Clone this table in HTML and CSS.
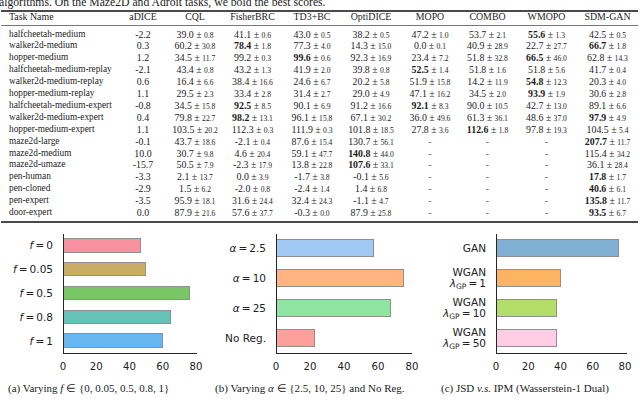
FILE: index.html
```html
<!DOCTYPE html>
<html lang="en">
<head>
<meta charset="utf-8">
<title>Results</title>
<link rel="stylesheet" href="styles.css">
</head>
<body>
<p class="caption">algorithms. On the Maze2D and Adroit tasks, we bold the best scores.</p>
<table class="results">
  <colgroup>
    <col class="w-task"><col class="w-50"><col class="w-54"><col class="w-61"><col class="w-58"><col class="w-60"><col class="w-58"><col class="w-57"><col class="w-61"><col class="w-61">
  </colgroup>
  <thead>
    <tr><th class="task">Task Name</th><th>aDICE</th><th>CQL</th><th>FisherBRC</th><th>TD3+BC</th><th>OptiDICE</th><th>MOPO</th><th>COMBO</th><th>WMOPO</th><th>SDM-GAN</th></tr>
  </thead>
  <tbody>
    <tr><td class="task">halfcheetah-medium</td><td>-2.2</td><td>39.0<span class="pm">±</span><small>0.8</small></td><td>41.1<span class="pm">±</span><small>0.6</small></td><td>43.0<span class="pm">±</span><small>0.5</small></td><td>38.2<span class="pm">±</span><small>0.5</small></td><td>47.2<span class="pm">±</span><small>1.0</small></td><td>53.7<span class="pm">±</span><small>2.1</small></td><td><b>55.6</b><span class="pm">±</span><small>1.3</small></td><td>42.5<span class="pm">±</span><small>0.5</small></td></tr>
    <tr><td class="task">walker2d-medium</td><td>0.3</td><td>60.2<span class="pm">±</span><small>30.8</small></td><td><b>78.4</b><span class="pm">±</span><small>1.8</small></td><td>77.3<span class="pm">±</span><small>4.0</small></td><td>14.3<span class="pm">±</span><small>15.0</small></td><td>0.0<span class="pm">±</span><small>0.1</small></td><td>40.9<span class="pm">±</span><small>28.9</small></td><td>22.7<span class="pm">±</span><small>27.7</small></td><td><b>66.7</b><span class="pm">±</span><small>1.8</small></td></tr>
    <tr><td class="task">hopper-medium</td><td>1.2</td><td>34.5<span class="pm">±</span><small>11.7</small></td><td>99.2<span class="pm">±</span><small>0.3</small></td><td><b>99.6</b><span class="pm">±</span><small>0.6</small></td><td>92.3<span class="pm">±</span><small>16.9</small></td><td>23.4<span class="pm">±</span><small>7.2</small></td><td>51.8<span class="pm">±</span><small>32.8</small></td><td><b>66.5</b><span class="pm">±</span><small>46.0</small></td><td>62.8<span class="pm">±</span><small>14.3</small></td></tr>
    <tr><td class="task">halfcheetah-medium-replay</td><td>-2.1</td><td>43.4<span class="pm">±</span><small>0.8</small></td><td>43.2<span class="pm">±</span><small>1.3</small></td><td>41.9<span class="pm">±</span><small>2.0</small></td><td>39.8<span class="pm">±</span><small>0.8</small></td><td><b>52.5</b><span class="pm">±</span><small>1.4</small></td><td>51.8<span class="pm">±</span><small>1.6</small></td><td>51.8<span class="pm">±</span><small>5.6</small></td><td>41.7<span class="pm">±</span><small>0.4</small></td></tr>
    <tr><td class="task">walker2d-medium-replay</td><td>0.6</td><td>16.4<span class="pm">±</span><small>6.6</small></td><td>38.4<span class="pm">±</span><small>16.6</small></td><td>24.6<span class="pm">±</span><small>6.7</small></td><td>20.2<span class="pm">±</span><small>5.8</small></td><td>51.9<span class="pm">±</span><small>15.8</small></td><td>14.2<span class="pm">±</span><small>11.9</small></td><td><b>54.8</b><span class="pm">±</span><small>12.3</small></td><td>20.3<span class="pm">±</span><small>4.0</small></td></tr>
    <tr><td class="task">hopper-medium-replay</td><td>1.1</td><td>29.5<span class="pm">±</span><small>2.3</small></td><td>33.4<span class="pm">±</span><small>2.8</small></td><td>31.4<span class="pm">±</span><small>2.7</small></td><td>29.0<span class="pm">±</span><small>4.9</small></td><td>47.1<span class="pm">±</span><small>16.2</small></td><td>34.5<span class="pm">±</span><small>2.0</small></td><td><b>93.9</b><span class="pm">±</span><small>1.9</small></td><td>30.6<span class="pm">±</span><small>2.8</small></td></tr>
    <tr><td class="task">halfcheetah-medium-expert</td><td>-0.8</td><td>34.5<span class="pm">±</span><small>15.8</small></td><td><b>92.5</b><span class="pm">±</span><small>8.5</small></td><td>90.1<span class="pm">±</span><small>6.9</small></td><td>91.2<span class="pm">±</span><small>16.6</small></td><td><b>92.1</b><span class="pm">±</span><small>8.3</small></td><td>90.0<span class="pm">±</span><small>10.5</small></td><td>42.7<span class="pm">±</span><small>13.0</small></td><td>89.1<span class="pm">±</span><small>6.6</small></td></tr>
    <tr><td class="task">walker2d-medium-expert</td><td>0.4</td><td>79.8<span class="pm">±</span><small>22.7</small></td><td><b>98.2</b><span class="pm">±</span><small>13.1</small></td><td>96.1<span class="pm">±</span><small>15.8</small></td><td>67.1<span class="pm">±</span><small>30.2</small></td><td>36.0<span class="pm">±</span><small>49.6</small></td><td>61.3<span class="pm">±</span><small>36.1</small></td><td>48.6<span class="pm">±</span><small>37.0</small></td><td><b>97.9</b><span class="pm">±</span><small>4.9</small></td></tr>
    <tr><td class="task">hopper-medium-expert</td><td>1.1</td><td>103.5<span class="pm">±</span><small>20.2</small></td><td>112.3<span class="pm">±</span><small>0.3</small></td><td>111.9<span class="pm">±</span><small>0.3</small></td><td>101.8<span class="pm">±</span><small>18.5</small></td><td>27.8<span class="pm">±</span><small>3.6</small></td><td><b>112.6</b><span class="pm">±</span><small>1.8</small></td><td>97.8<span class="pm">±</span><small>19.3</small></td><td>104.5<span class="pm">±</span><small>5.4</small></td></tr>
    <tr><td class="task">maze2d-large</td><td>-0.1</td><td>43.7<span class="pm">±</span><small>18.6</small></td><td>-2.1<span class="pm">±</span><small>0.4</small></td><td>87.6<span class="pm">±</span><small>15.4</small></td><td>130.7<span class="pm">±</span><small>56.1</small></td><td class="na">-</td><td class="na">-</td><td class="na">-</td><td><b>207.7</b><span class="pm">±</span><small>11.7</small></td></tr>
    <tr><td class="task">maze2d-medium</td><td>10.0</td><td>30.7<span class="pm">±</span><small>9.8</small></td><td>4.6<span class="pm">±</span><small>20.4</small></td><td>59.1<span class="pm">±</span><small>47.7</small></td><td><b>140.8</b><span class="pm">±</span><small>44.0</small></td><td class="na">-</td><td class="na">-</td><td class="na">-</td><td>115.4<span class="pm">±</span><small>34.2</small></td></tr>
    <tr><td class="task">maze2d-umaze</td><td>-15.7</td><td>50.5<span class="pm">±</span><small>7.9</small></td><td>-2.3<span class="pm">±</span><small>17.9</small></td><td>13.8<span class="pm">±</span><small>22.8</small></td><td><b>107.6</b><span class="pm">±</span><small>33.1</small></td><td class="na">-</td><td class="na">-</td><td class="na">-</td><td>36.1<span class="pm">±</span><small>28.4</small></td></tr>
    <tr><td class="task">pen-human</td><td>-3.3</td><td>2.1<span class="pm">±</span><small>13.7</small></td><td>0.0<span class="pm">±</span><small>3.9</small></td><td>-1.7<span class="pm">±</span><small>3.8</small></td><td>-0.1<span class="pm">±</span><small>5.6</small></td><td class="na">-</td><td class="na">-</td><td class="na">-</td><td><b>17.8</b><span class="pm">±</span><small>1.7</small></td></tr>
    <tr><td class="task">pen-cloned</td><td>-2.9</td><td>1.5<span class="pm">±</span><small>6.2</small></td><td>-2.0<span class="pm">±</span><small>0.8</small></td><td>-2.4<span class="pm">±</span><small>1.4</small></td><td>1.4<span class="pm">±</span><small>6.8</small></td><td class="na">-</td><td class="na">-</td><td class="na">-</td><td><b>40.6</b><span class="pm">±</span><small>6.1</small></td></tr>
    <tr><td class="task">pen-expert</td><td>-3.5</td><td>95.9<span class="pm">±</span><small>18.1</small></td><td>31.6<span class="pm">±</span><small>24.4</small></td><td>32.4<span class="pm">±</span><small>24.3</small></td><td>-1.1<span class="pm">±</span><small>4.7</small></td><td class="na">-</td><td class="na">-</td><td class="na">-</td><td><b>135.8</b><span class="pm">±</span><small>11.7</small></td></tr>
    <tr><td class="task">door-expert</td><td>0.0</td><td>87.9<span class="pm">±</span><small>21.6</small></td><td>57.6<span class="pm">±</span><small>37.7</small></td><td>-0.3<span class="pm">±</span><small>0.0</small></td><td>87.9<span class="pm">±</span><small>25.8</small></td><td class="na">-</td><td class="na">-</td><td class="na">-</td><td><b>93.5</b><span class="pm">±</span><small>6.7</small></td></tr>
  </tbody>
</table>

<div class="figures">
  <figure class="panel panel-a">
    <div class="chart">
      <div class="ylabels">
        <div class="ylab"><i>f</i>&#8201;=&#8201;0</div>
        <div class="ylab"><i>f</i>&#8201;=&#8201;0.05</div>
        <div class="ylab"><i>f</i>&#8201;=&#8201;0.5</div>
        <div class="ylab"><i>f</i>&#8201;=&#8201;0.8</div>
        <div class="ylab"><i>f</i>&#8201;=&#8201;1</div>
      </div>
      <div class="plot">
        <div class="band"><div class="bar a1" style="width:77px"></div></div>
        <div class="band"><div class="bar a2" style="width:82px"></div></div>
        <div class="band"><div class="bar a3" style="width:126px"></div></div>
        <div class="band"><div class="bar a4" style="width:107px"></div></div>
        <div class="band"><div class="bar a5" style="width:99px"></div></div>
      </div>
      <div class="xticks"><span>0</span><span>20</span><span>40</span><span>60</span><span>80</span></div>
    </div>
    <figcaption>(a) Varying <i>f</i> ∈ {0, 0.05, 0.5, 0.8, 1}</figcaption>
  </figure>

  <figure class="panel panel-b">
    <div class="chart">
      <div class="ylabels">
        <div class="ylab"><i>α</i>&#8201;=&#8201;2.5</div>
        <div class="ylab"><i>α</i>&#8201;=&#8201;10</div>
        <div class="ylab"><i>α</i>&#8201;=&#8201;25</div>
        <div class="ylab">No Reg.</div>
      </div>
      <div class="plot">
        <div class="band"><div class="bar b1" style="width:97px"></div></div>
        <div class="band"><div class="bar b2" style="width:127px"></div></div>
        <div class="band"><div class="bar b3" style="width:114px"></div></div>
        <div class="band"><div class="bar b4" style="width:38px"></div></div>
      </div>
      <div class="xticks"><span>0</span><span>20</span><span>40</span><span>60</span><span>80</span></div>
    </div>
    <figcaption>(b) Varying <i>α</i> ∈ {2.5, 10, 25} and No Reg.</figcaption>
  </figure>

  <figure class="panel panel-c">
    <div class="chart">
      <div class="ylabels">
        <div class="ylab">GAN</div>
        <div class="ylab two"><span>WGAN</span><span><i>λ</i><sub>GP</sub>&#8201;=&#8201;1</span></div>
        <div class="ylab two"><span>WGAN</span><span><i>λ</i><sub>GP</sub>&#8201;=&#8201;10</span></div>
        <div class="ylab two"><span>WGAN</span><span><i>λ</i><sub>GP</sub>&#8201;=&#8201;50</span></div>
      </div>
      <div class="plot">
        <div class="band"><div class="bar c1" style="width:122px"></div></div>
        <div class="band"><div class="bar c2" style="width:64px"></div></div>
        <div class="band"><div class="bar c3" style="width:60px"></div></div>
        <div class="band"><div class="bar c4" style="width:60px"></div></div>
      </div>
      <div class="xticks"><span>0</span><span>20</span><span>40</span><span>60</span><span>80</span></div>
    </div>
    <figcaption>(c) JSD <i>v.s.</i> IPM (Wasserstein-1 Dual)</figcaption>
  </figure>
</div>
</body>
</html>
```

FILE: styles.css
```css
* { box-sizing: border-box; }

html, body {
  margin: 0;
  padding: 0;
  background: #ffffff;
}

body {
  width: 640px;
  height: 402px;
  overflow: hidden;
  color: #1c1c1c;
  font-family: "Liberation Serif", "Times New Roman", serif;
}

/* ---------- caption (cut off at the top) ---------- */
.caption {
  margin: -3px 0 1px -1px;
  font-size: 11.7px;
  line-height: 12px;
  white-space: nowrap;
}

/* ---------- results table ---------- */
.results {
  width: 637px;
  margin-left: 1px;
  table-layout: fixed;
  border-collapse: separate;
  border-spacing: 0;
  border-top: 2px solid #4a4a4a;
  border-bottom: 2px solid #4a4a4a;
  font-size: 9.9px;
  white-space: nowrap;
}

.w-task { width: 117px; }
.w-50 { width: 50px; }
.w-54 { width: 54px; }
.w-57 { width: 57px; }
.w-58 { width: 58px; }
.w-60 { width: 60px; }
.w-61 { width: 61px; }

.results th {
  font-weight: normal;
  text-align: center;
  line-height: 10px;
  height: 14px;
  padding: 0 0 3px 0;
  border-bottom: 1px solid #777;
}

.results td {
  text-align: center;
  line-height: 11.9px;
  height: 11.9px;
  padding: 0;
}

.results tbody tr:first-child td { padding-top: 2.5px; }
.results tbody tr:last-child td { padding-bottom: 1.5px; }

.results .task {
  text-align: left;
  padding-left: 8px;
}

.results td.task { font-size: 9.3px; }

.results b { font-weight: bold; line-height: 0; }

.results .pm { margin: 0 2.4px; line-height: 0; }

.results small { font-size: 7.6px; line-height: 0; }

.results .na { color: #666; }

/* ---------- figures ---------- */
.figures {
  display: flex;
  margin-top: 11px;
  font-family: "DejaVu Sans", "Liberation Sans", sans-serif;
  color: #222;
}

.panel {
  margin: 0;
  flex: none;
}

.panel-a { width: 213px; --lab: 63px; --plotw: 134px; --tickw: 133px; --barh: 14.4px; }
.panel-b { width: 214px; --lab: 63px; --plotw: 136px; --tickw: 136px; --barh: 18px; }
.panel-c { width: 213px; --lab: 69px; --plotw: 131px; --tickw: 129px; --barh: 17.8px; }

.chart {
  display: grid;
  grid-template-columns: var(--lab) var(--plotw);
  grid-template-rows: 120px auto;
}

.ylabels {
  display: flex;
  flex-direction: column;
  padding-bottom: 1px;
}

.ylab {
  flex: 1;
  display: flex;
  align-items: center;
  justify-content: flex-end;
  padding-right: 10px;
  font-size: 10.5px;
  white-space: nowrap;
}

.ylab.two {
  flex-direction: column;
  align-items: flex-end;
  justify-content: center;
  line-height: 11px;
}

.ylab sub {
  font-size: 7.5px;
  vertical-align: -2px;
  line-height: 0;
}

.plot {
  display: flex;
  flex-direction: column;
  border-left: 1.4px solid #262626;
  border-bottom: 1.4px solid #262626;
}

.band {
  flex: 1;
  display: flex;
  align-items: center;
}

.bar {
  height: var(--barh);
  border: 1px solid #8f8f8f;
  border-left: none;
}

.a1 { background: #f891a0; }
.a2 { background: #c9ad65; }
.a3 { background: #78c665; }
.a4 { background: #64c3b6; }
.a5 { background: #68b6ef; }

.b1 { background: #a1c9f4; }
.b2 { background: #ffb482; }
.b3 { background: #8de5a1; }
.b4 { background: #ff9f9b; }

.c1 { background: #80b1d3; }
.c2 { background: #fdb462; }
.c3 { background: #b3de69; }
.c4 { background: #fccde5; }

.xticks {
  grid-column: 2;
  width: var(--tickw);
  display: flex;
  justify-content: space-between;
  padding-top: 7px;
  font-size: 10.2px;
  line-height: 11px;
}

.xticks span {
  width: 0;
  display: flex;
  justify-content: center;
}

figcaption {
  margin-top: 10px;
  font-family: "Liberation Serif", "Times New Roman", serif;
  font-size: 11px;
  line-height: 13px;
  color: #1c1c1c;
  white-space: nowrap;
}

.panel-a figcaption { padding-left: 8px; }
.panel-b figcaption { padding-left: 2px; }
.panel-c figcaption { padding-left: 14px; }
```
